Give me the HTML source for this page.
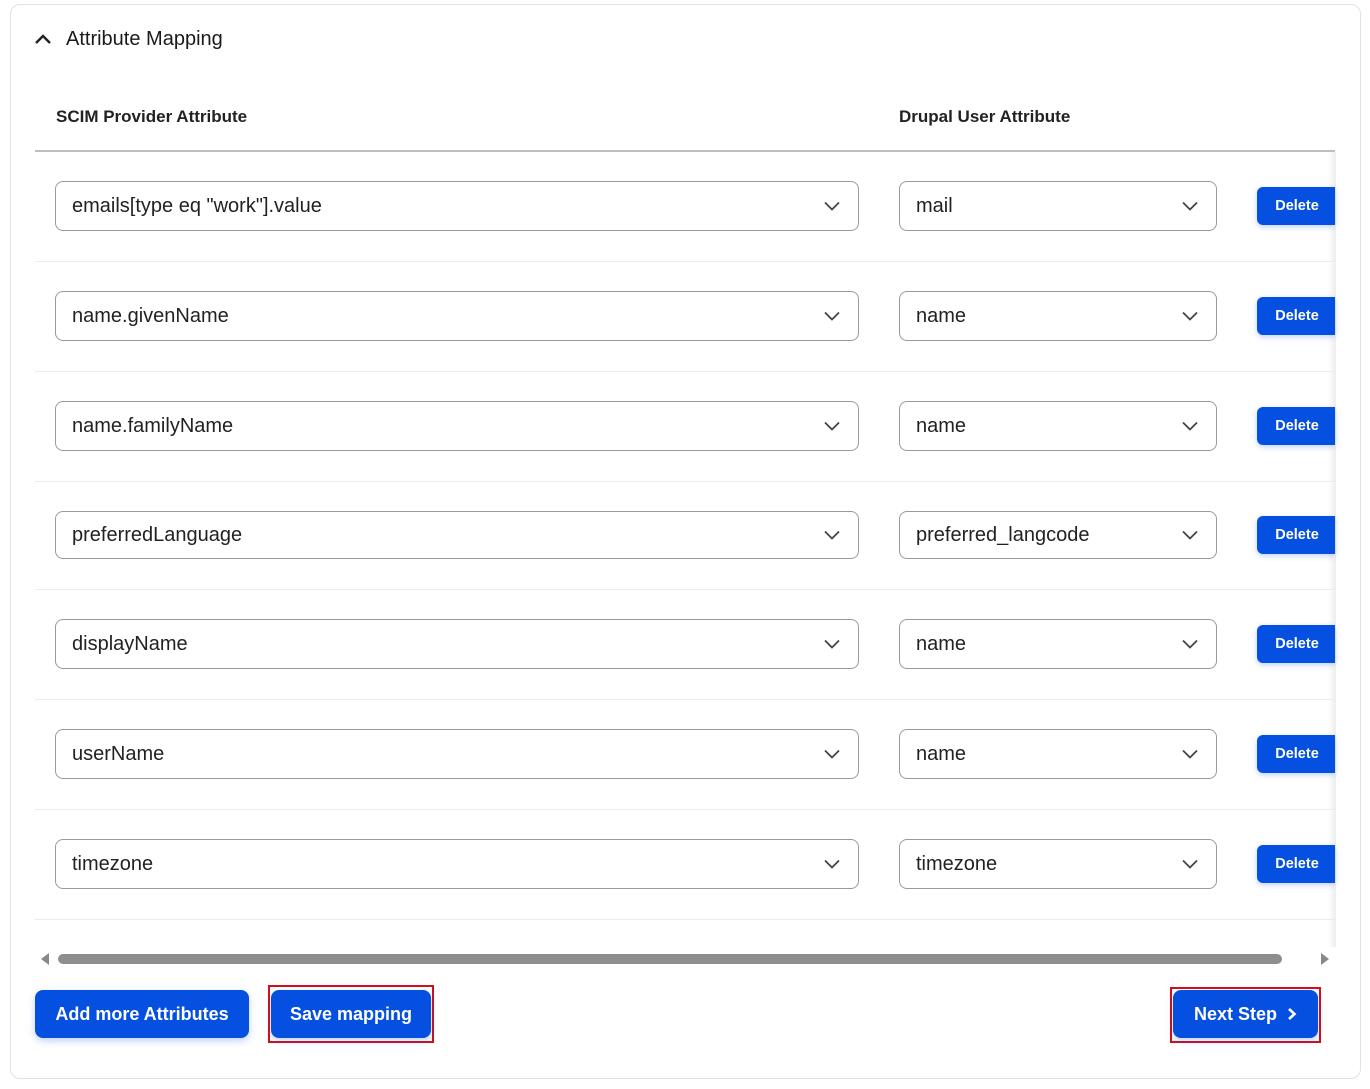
<!DOCTYPE html>
<html><head><meta charset="utf-8"><style>
*{box-sizing:border-box;margin:0;padding:0}
body{width:1370px;height:1089px;background:#fff;font-family:"Liberation Sans",Arial,sans-serif;position:relative;overflow:hidden;color:#222}
.card{position:absolute;left:10px;top:4px;width:1351px;height:1075px;border:1px solid #e2e2e2;border-radius:10px;background:#fff}
.abs{position:absolute}
.title{left:66px;top:28px;font-size:20px;color:#1a1a1a}
.th{font-size:17px;font-weight:bold;color:#222;top:107px}
.hline{left:35px;top:150px;width:1300px;height:2px;background:#bdbdbd}
.sep{position:absolute;left:35px;width:1300px;height:1px;background:#ebebeb}
.sel{position:absolute;border:1px solid #9a9a9a;border-radius:8px;background:#fff;font-size:20px;color:#222;padding-left:16px;display:flex;align-items:center}
.sel svg{position:absolute;right:18px;top:50%;margin-top:-5px}
.del{position:absolute;left:1257px;width:78px;height:38px;background:#0550e0;color:#fff;font-weight:bold;font-size:14.5px;border-radius:6px 0 0 6px;display:flex;align-items:center;justify-content:center;padding-left:2px;box-shadow:0 2px 6px rgba(5,80,224,.25)}
.shade{left:1328px;top:152px;width:8px;height:795px;background:linear-gradient(to right,rgba(0,0,0,0),rgba(0,0,0,.07))}
.btn{position:absolute;top:990px;height:48px;background:#0550e0;color:#fff;font-weight:bold;font-size:18px;border-radius:8px;display:flex;align-items:center;justify-content:center;box-shadow:0 3px 8px rgba(5,80,224,.25)}
.red{position:absolute;border:2px solid #d0101a}
</style></head><body>
<div class="card"></div>
<svg class="abs" style="left:34px;top:33px" width="18" height="12" viewBox="0 0 18 12"><path d="M2 10 L9 3 L16 10" fill="none" stroke="#222" stroke-width="2.4"/></svg>
<div class="abs title">Attribute Mapping</div>
<div class="abs th" style="left:56px">SCIM Provider Attribute</div>
<div class="abs th" style="left:899px">Drupal User Attribute</div>
<div class="abs hline"></div>
<div class="abs shade"></div>

<div class="sel" style="left:55px;top:181px;width:804px;height:50px">emails[type eq "work"].value<svg width="16" height="10" viewBox="0 0 16 10"><path d="M1 1.5 L8 8.5 L15 1.5" fill="none" stroke="#444" stroke-width="1.8"/></svg></div>
<div class="sel" style="left:899px;top:181px;width:318px;height:50px">mail<svg width="16" height="10" viewBox="0 0 16 10"><path d="M1 1.5 L8 8.5 L15 1.5" fill="none" stroke="#444" stroke-width="1.8"/></svg></div>
<div class="del" style="top:187px">Delete</div>
<div class="sep" style="top:261px"></div>

<div class="sel" style="left:55px;top:291px;width:804px;height:50px">name.givenName<svg width="16" height="10" viewBox="0 0 16 10"><path d="M1 1.5 L8 8.5 L15 1.5" fill="none" stroke="#444" stroke-width="1.8"/></svg></div>
<div class="sel" style="left:899px;top:291px;width:318px;height:50px">name<svg width="16" height="10" viewBox="0 0 16 10"><path d="M1 1.5 L8 8.5 L15 1.5" fill="none" stroke="#444" stroke-width="1.8"/></svg></div>
<div class="del" style="top:297px">Delete</div>
<div class="sep" style="top:371px"></div>

<div class="sel" style="left:55px;top:401px;width:804px;height:50px">name.familyName<svg width="16" height="10" viewBox="0 0 16 10"><path d="M1 1.5 L8 8.5 L15 1.5" fill="none" stroke="#444" stroke-width="1.8"/></svg></div>
<div class="sel" style="left:899px;top:401px;width:318px;height:50px">name<svg width="16" height="10" viewBox="0 0 16 10"><path d="M1 1.5 L8 8.5 L15 1.5" fill="none" stroke="#444" stroke-width="1.8"/></svg></div>
<div class="del" style="top:407px">Delete</div>
<div class="sep" style="top:481px"></div>

<div class="sel" style="left:55px;top:511px;width:804px;height:48px">preferredLanguage<svg width="16" height="10" viewBox="0 0 16 10"><path d="M1 1.5 L8 8.5 L15 1.5" fill="none" stroke="#444" stroke-width="1.8"/></svg></div>
<div class="sel" style="left:899px;top:511px;width:318px;height:48px">preferred_langcode<svg width="16" height="10" viewBox="0 0 16 10"><path d="M1 1.5 L8 8.5 L15 1.5" fill="none" stroke="#444" stroke-width="1.8"/></svg></div>
<div class="del" style="top:516px">Delete</div>
<div class="sep" style="top:589px"></div>

<div class="sel" style="left:55px;top:619px;width:804px;height:50px">displayName<svg width="16" height="10" viewBox="0 0 16 10"><path d="M1 1.5 L8 8.5 L15 1.5" fill="none" stroke="#444" stroke-width="1.8"/></svg></div>
<div class="sel" style="left:899px;top:619px;width:318px;height:50px">name<svg width="16" height="10" viewBox="0 0 16 10"><path d="M1 1.5 L8 8.5 L15 1.5" fill="none" stroke="#444" stroke-width="1.8"/></svg></div>
<div class="del" style="top:625px">Delete</div>
<div class="sep" style="top:699px"></div>

<div class="sel" style="left:55px;top:729px;width:804px;height:50px">userName<svg width="16" height="10" viewBox="0 0 16 10"><path d="M1 1.5 L8 8.5 L15 1.5" fill="none" stroke="#444" stroke-width="1.8"/></svg></div>
<div class="sel" style="left:899px;top:729px;width:318px;height:50px">name<svg width="16" height="10" viewBox="0 0 16 10"><path d="M1 1.5 L8 8.5 L15 1.5" fill="none" stroke="#444" stroke-width="1.8"/></svg></div>
<div class="del" style="top:735px">Delete</div>
<div class="sep" style="top:809px"></div>

<div class="sel" style="left:55px;top:839px;width:804px;height:50px">timezone<svg width="16" height="10" viewBox="0 0 16 10"><path d="M1 1.5 L8 8.5 L15 1.5" fill="none" stroke="#444" stroke-width="1.8"/></svg></div>
<div class="sel" style="left:899px;top:839px;width:318px;height:50px">timezone<svg width="16" height="10" viewBox="0 0 16 10"><path d="M1 1.5 L8 8.5 L15 1.5" fill="none" stroke="#444" stroke-width="1.8"/></svg></div>
<div class="del" style="top:845px">Delete</div>
<div class="sep" style="top:919px"></div>

<svg class="abs" style="left:40px;top:953px" width="10" height="12"><path d="M9 0 L1 6 L9 12Z" fill="#888"/></svg>
<div class="abs" style="left:58px;top:954px;width:1224px;height:10px;border-radius:5px;background:#8e8e8e"></div>
<svg class="abs" style="left:1320px;top:953px" width="10" height="12"><path d="M1 0 L9 6 L1 12Z" fill="#888"/></svg>

<div class="btn" style="left:35px;width:214px">Add more Attributes</div>
<div class="red" style="left:268px;top:985px;width:166px;height:58px"></div>
<div class="btn" style="left:271px;width:160px">Save mapping</div>
<div class="red" style="left:1170px;top:987px;width:151px;height:56px"></div>
<div class="btn" style="left:1173px;width:145px">Next Step<svg style="margin-left:10px" width="10" height="14" viewBox="0 0 10 14"><path d="M2 2 L7.5 7 L2 12" fill="none" stroke="#fff" stroke-width="2.6"/></svg></div>
</body></html>
